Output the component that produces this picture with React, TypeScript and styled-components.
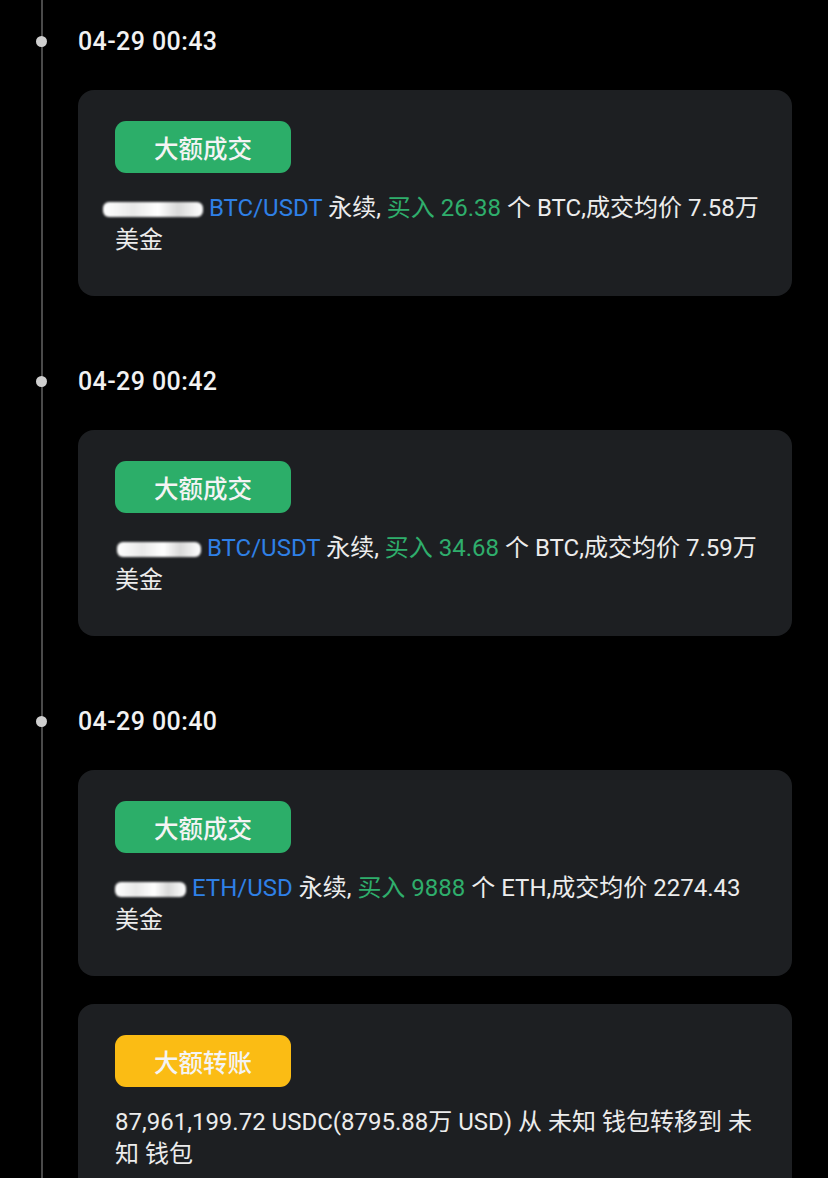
import React from "react";
import styled, { createGlobalStyle } from "styled-components";

const Global = createGlobalStyle`
  html, body { margin: 0; padding: 0; background: #000; }
  body { font-family: Roboto, "Noto Sans CJK SC", sans-serif; }
`;

const Page = styled.div`
  position: relative;
  width: 828px;
  height: 1178px;
  overflow: hidden;
  background: #000;
  box-sizing: border-box;
  padding: 28px 36px 0 78px;
  &::before {
    content: "";
    position: absolute;
    left: 41px;
    top: 0;
    bottom: 0;
    width: 2px;
    background: #4a4a4a;
  }
`;

const Group = styled.section`
  display: flex;
  flex-direction: column;
  margin-bottom: 72px;
`;

const TimeRow = styled.div`
  position: relative;
  height: 26px;
  display: flex;
  align-items: center;
  font-family: Roboto, sans-serif;
  font-size: 25px;
  font-weight: 500;
  letter-spacing: 0.4px;
  color: #f2f2f2;
  margin-bottom: 36px;
  &::before {
    content: "";
    position: absolute;
    left: -42px;
    top: 50%;
    width: 11px;
    height: 11px;
    margin-top: -5px;
    border-radius: 50%;
    background: #cfcfcf;
  }
`;

const Cards = styled.div`
  display: flex;
  flex-direction: column;
  gap: 28px;
`;

const Card = styled.div`
  background: #1d1f22;
  border-radius: 16px;
  padding: 31px 26px 40px 37px;
  display: flex;
  flex-direction: column;
  align-items: flex-start;
  gap: 19px;
`;

const Badge = styled.div<{ $tone: "green" | "yellow" }>`
  width: 176px;
  height: 52px;
  border-radius: 11px;
  background: ${(p) => (p.$tone === "green" ? "#2cae69" : "#fbbc14")};
  color: #f4f4f4;
  display: flex;
  align-items: center;
  justify-content: center;
  font-family: "Noto Sans CJK SC", sans-serif;
  font-size: 24.5px;
  font-weight: 500;
`;

const Body = styled.p`
  margin: 0;
  font-family: Roboto, "Noto Sans CJK SC", sans-serif;
  font-size: 24px;
  line-height: 32px;
  color: #ececec;
  word-break: break-all;
`;

const Pair = styled.span`
  color: #2f80e6;
`;

const Buy = styled.span`
  color: #2fae6c;
`;

const Smudge = styled.span<{ $w: number; $ml: number }>`
  display: inline-block;
  width: ${(p) => p.$w}px;
  height: 15px;
  margin-left: ${(p) => p.$ml}px;
  vertical-align: -1px;
  border-radius: 6px;
  background: linear-gradient(90deg, #fff 0%, #e8e8e8 30%, #fff 55%, #d8d8d8 75%, #fff 100%);
  filter: blur(1.2px);
`;

type Trade = {
  time: string;
  smudge: [number, number];
  pair: string;
  amount: string;
  coin: string;
  price: string;
};

const trades: Trade[] = [
  { time: "04-29 00:43", smudge: [100, -12], pair: "BTC/USDT", amount: "26.38", coin: "BTC", price: "7.58万" },
  { time: "04-29 00:42", smudge: [84, 2], pair: "BTC/USDT", amount: "34.68", coin: "BTC", price: "7.59万" },
  { time: "04-29 00:40", smudge: [71, 0], pair: "ETH/USD", amount: "9888", coin: "ETH", price: "2274.43" },
];

const TradeCard: React.FC<{ t: Trade }> = ({ t }) => (
  <Card>
    <Badge $tone="green">大额成交</Badge>
    <Body>
      <Smudge $w={t.smudge[0]} $ml={t.smudge[1]} /> <Pair>{t.pair}</Pair> 永续, <Buy>买入 {t.amount}</Buy> 个 {t.coin},成交均价 {t.price} 美金
    </Body>
  </Card>
);

export default function App() {
  return (
    <>
      <Global />
      <Page>
        {trades.map((t, i) => (
          <Group key={t.time}>
            <TimeRow>{t.time}</TimeRow>
            <Cards>
              <TradeCard t={t} />
              {i === trades.length - 1 && (
                <Card>
                  <Badge $tone="yellow">大额转账</Badge>
                  <Body>87,961,199.72 USDC(8795.88万 USD) 从 未知 钱包转移到 未知 钱包</Body>
                </Card>
              )}
            </Cards>
          </Group>
        ))}
      </Page>
    </>
  );
}
